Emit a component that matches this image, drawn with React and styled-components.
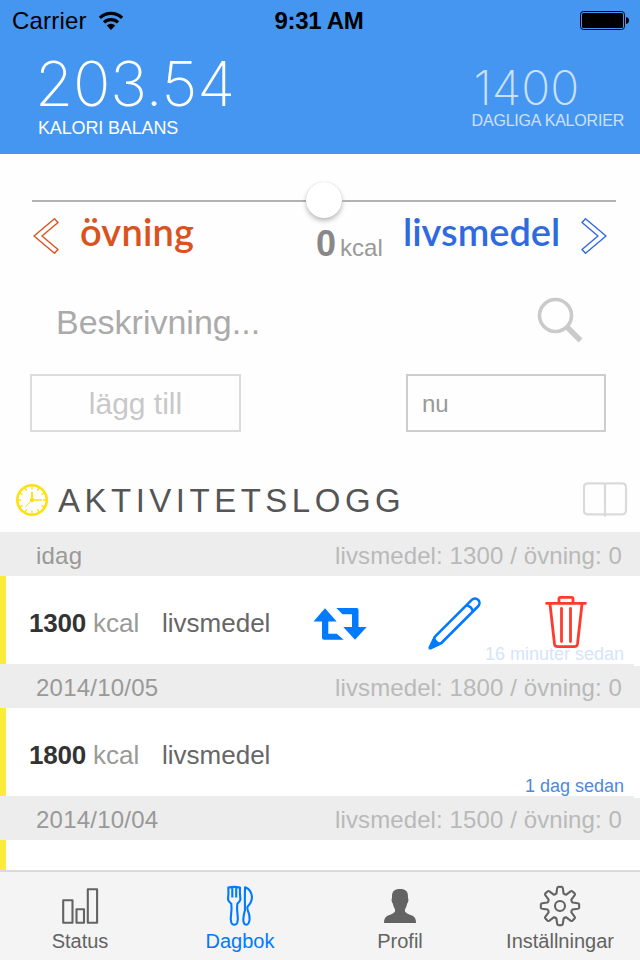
import React from "react";
import styled, { createGlobalStyle } from "styled-components";

const Global = createGlobalStyle`
  * { box-sizing: border-box; }
  body { margin: 0; background: #fefefe; font-family: "Liberation Sans", Arial, sans-serif; }
  button, input { font-family: inherit; }
`;

const Screen = styled.div`
  width: 640px;
  height: 960px;
  overflow: hidden;
  display: flex;
  flex-direction: column;
  background: #fefefe;
`;

const Header = styled.header`
  height: 154px;
  flex: none;
  background: #4596f1;
  color: #fff;
`;

const StatusBar = styled.div`
  height: 40px;
  padding: 0 11px 0 12px;
  display: grid;
  grid-template-columns: 1fr auto 1fr;
  align-items: center;
  color: #000;
  font-size: 24px;
  line-height: 28px;
`;

const Carrier = styled.div`
  display: flex;
  align-items: center;
  gap: 11px;
  padding-top: 2px;
  letter-spacing: 0.2px;
`;

const Clock = styled.div`
  padding-top: 2px;
  margin-right: 3px;
  font-weight: 700;
  letter-spacing: -0.3px;
`;

const BatterySlot = styled.div`
  display: flex;
  justify-content: flex-end;
`;

const Totals = styled.div`
  display: flex;
  justify-content: space-between;
  padding: 0 16px 0 38px;
`;

const Total = styled.div`
  padding-top: ${(p) => (p.$small ? 27 : 14)}px;
  opacity: ${(p) => (p.$small ? 0.72 : 1)};
`;

const TotalNumber = styled.div`
  margin-left: ${(p) => (p.$small ? 2 : -3)}px;
  font-family: Inter, "Liberation Sans", sans-serif;
  font-weight: 250;
  font-size: ${(p) => (p.$small ? 48 : 62)}px;
  line-height: ${(p) => (p.$small ? 42 : 60)}px;
  letter-spacing: ${(p) => (p.$small ? 0 : -0.2)}px;
`;

const TotalLabel = styled.div`
  font-size: ${(p) => (p.$small ? 16 : 18)}px;
  line-height: ${(p) => (p.$small ? 24 : 28)}px;
  letter-spacing: ${(p) => (p.$small ? -0.2 : -0.15)}px;
  white-space: nowrap;
`;

const Entry = styled.section`
  height: 378px;
  flex: none;
  display: flex;
  flex-direction: column;
`;

const Slider = styled.div`
  height: 36px;
  margin: 28px 24px 0 32px;
  display: flex;
  align-items: center;
`;

const Track = styled.div`
  height: 2px;
  margin-top: 2px;
  flex: ${(p) => p.$grow};
  background: #b2b2b2;
`;

const Knob = styled.div`
  width: 36px;
  height: 36px;
  border-radius: 50%;
  background: #fff;
  box-shadow: 0 3px 5px rgba(0, 0, 0, 0.25), 0 0 1px rgba(0, 0, 0, 0.2);
`;

const Kinds = styled.div`
  height: 60px;
  display: flex;
  align-items: flex-start;
  padding: 0 32px 0 33px;
`;

const Kind = styled.div`
  margin-left: ${(p) => p.$left}px;
  width: ${(p) => p.$width}px;
  font-family: Lato, sans-serif;
  font-weight: 600;
  font-size: 38px;
  line-height: 26px;
  letter-spacing: ${(p) => p.$spacing}px;
  color: ${(p) => p.$color};
  white-space: nowrap;
`;

const ChevronSlot = styled.div`
  margin-left: ${(p) => p.$left}px;
  height: 36px;
`;

const Amount = styled.div`
  margin-left: ${(p) => p.$left}px;
  width: 69px;
  padding-top: 6px;
  display: flex;
  align-items: baseline;
  gap: 4px;
  color: #999;
  font-size: 24px;
  line-height: 40px;
`;

const AmountValue = styled.strong`
  font-size: 36px;
  color: #888;
`;

const Search = styled.div`
  height: 50px;
  margin-top: 17px;
  padding: 0 56px;
  display: flex;
  align-items: center;
  justify-content: space-between;
  color: #aaa;
  font-size: 34px;
  line-height: 40px;
`;

const SearchText = styled.span`
  padding-top: 4px;
`;

const Controls = styled.div`
  margin-top: 29px;
  padding: 0 34px 0 30px;
  display: flex;
  justify-content: space-between;
`;

const AddButton = styled.button`
  width: 211px;
  height: 58px;
  padding: 2px 0 0;
  border: 2px solid #dcdcdc;
  background: transparent;
  color: #c8c8c8;
  font-size: 30px;
`;

const TimeField = styled.div`
  width: 200px;
  height: 58px;
  padding: 2px 14px 0;
  display: flex;
  align-items: center;
  border: 2px solid #cdcdcd;
  color: #999;
  font-size: 24px;
`;

const LogTitle = styled.div`
  height: 64px;
  margin-top: auto;
  padding: 0 12px 0 16px;
  display: flex;
  align-items: center;
`;

const LogHeading = styled.h1`
  flex: 1;
  margin: 0 0 0 10px;
  padding-top: 2px;
  color: #555;
  font-weight: 400;
  font-size: 33px;
  line-height: 38px;
  letter-spacing: 4.5px;
`;

const Log = styled.main`
  flex: 1;
  overflow: hidden;
`;

const DayHeader = styled.div`
  height: 44px;
  padding: 4px 18px 0 36px;
  display: flex;
  align-items: center;
  justify-content: space-between;
  background: linear-gradient(#fff, #fff) right top / 6px ${(p) => (p.$first ? 0 : 2)}px no-repeat #ededed;
  color: #999;
  font-size: 24px;
  letter-spacing: 0.22px;
`;

const DaySummary = styled.span`
  color: #b9b9b9;
  letter-spacing: 0.1px;
`;

const LogRow = styled.div`
  position: relative;
  height: 88px;
  padding: 6px 0 0 23px;
  display: flex;
  align-items: center;
  border-left: 6px solid #ffeb3b;
  background: #fff;
  color: #999;
  font-size: 26px;
`;

const Calories = styled.strong`
  width: 64px;
  color: #333;
  letter-spacing: -0.2px;
`;

const Unit = styled.span`
  width: 69px;
`;

const Type = styled.span`
  color: #666;
`;

const Actions = styled.div`
  position: absolute;
  left: 302px;
  top: 14px;
  display: grid;
  grid-template-columns: 120px 112px 48px;
`;

const Ago = styled.div`
  position: absolute;
  right: 16px;
  bottom: 0;
  color: ${(p) => (p.$faded ? "#d6e4f8" : "#4a8ae0")};
  font-size: 18px;
  line-height: 20px;
`;

const TabBar = styled.nav`
  height: 90px;
  flex: none;
  display: grid;
  grid-template-columns: repeat(4, 1fr);
  border-top: 2px solid #dadada;
  background: #f4f4f4;
`;

const Tab = styled.div`
  display: flex;
  flex-direction: column;
  align-items: center;
  padding-top: 12px;
  color: ${(p) => (p.$active ? "#007aff" : "#636363")};
  font-size: 20px;
  line-height: 22px;
  gap: 2px;
`;

const Wifi = () => (
  <svg width="26" height="20" viewBox="0 0 26 20" fill="none" stroke="#000" strokeWidth="3.2">
    <path d="M1.900 6.900a16 16 0 0 1 22.200 0" />
    <path d="M6 11.400a10 10 0 0 1 14 0" />
    <path d="M8.700 14.600a6.200 6.200 0 0 1 8.600 0L13 19z" fill="#000" stroke="none" />
  </svg>
);

const Battery = () => (
  <svg width="49" height="19" viewBox="0 0 49 19">
    <rect x=".5" y=".5" width="44" height="18" rx="3" fill="none" stroke="#000" />
    <rect x="2" y="2" width="41" height="15" rx="1.5" />
    <path d="M46 6c2 .3 3 1.500 3 3.500s-1 3.200-3 3.500z" />
  </svg>
);

const Chevron = ({ color, right }) => (
  <svg width="26" height="36" viewBox="0 0 26 36" fill="none" stroke={color} strokeWidth="1.4" strokeLinejoin="round">
    <path
      transform={right ? "translate(26 0) scale(-1 1)" : undefined}
      d="M1 18 21.500 .8 25 4.500 9 18 25 31.500 21.500 35.200z"
    />
  </svg>
);

const SearchIcon = () => (
  <svg width="48" height="48" viewBox="0 0 48 48" fill="none" stroke="#cacaca">
    <circle cx="19.500" cy="19.500" r="16" strokeWidth="3.600" />
    <path d="M30.500 30.500 44.500 44.500" strokeWidth="5.500" />
  </svg>
);

const ClockIcon = () => (
  <svg width="32" height="32" viewBox="0 0 32 32" fill="none" stroke="#fddf14">
    <circle cx="16" cy="16" r="14.700" strokeWidth="2.600" />
    {Array.from({ length: 12 }, (_, i) => (
      <path key={i} d="M16 2v3.200" strokeWidth="1.400" transform={`rotate(${i * 30} 16 16)`} />
    ))}
    <path d="M16 8v8" strokeWidth="2" />
    <path d="M16 16h10" strokeWidth="1.500" />
    <path d="M16 16 9.500 22.500" strokeWidth="1" />
    <circle cx="16" cy="16" r="2.200" fill="#fddf14" stroke="none" />
  </svg>
);

const BookIcon = () => (
  <svg width="45" height="36" viewBox="0 0 45 36" fill="none" stroke="#dadada" strokeWidth="2.200">
    <path
      transform="translate(-.5 -.7)"
      d="M22.500 3.500Q22.500 2 20.500 2H5.500Q1.500 2 1.500 6V29Q1.500 33 5.500 33H20.500Q22.500 33 22.500 34.500Q22.500 33 24.500 33H39.500Q43.500 33 43.500 29V6Q43.500 2 39.500 2H24.500Q22.500 2 22.500 3.500V35.500"
    />
  </svg>
);

const RepeatIcon = () => (
  <svg width="64" height="64" viewBox="0 0 64 64" fill="#007aff">
    <path d="M5.500 31.500 17 18.300 28.700 31.500H20.300V43.700H28.700L35.700 49.800H16Q14 49.800 14 47.800V31.500z" />
    <path d="M28.300 18H48.700Q50.500 18 50.500 19.800V37H58.700L47 49.800 35.300 37H44V24.200H34.500z" />
  </svg>
);

const PencilIcon = () => (
  <svg width="64" height="64" viewBox="0 0 64 64" fill="none" stroke="#007aff" strokeWidth="2.600" strokeLinejoin="round">
    <g transform="translate(.3 59.700) rotate(-45)">
      <path d="M14-4.500H66a4.500 4.500 0 0 1 0 9H14L2.500 .5 2.500-.5z" />
      <path d="M58.500-4.500Q61.500 0 58.500 4.500" />
      <path d="M0 0 14-5.700Q11 0 14 5.700z" fill="#007aff" stroke="none" />
    </g>
  </svg>
);

const TrashIcon = () => (
  <svg width="48" height="64" viewBox="0 0 48 64" fill="none" stroke="#ff3b30" strokeWidth="2.800" strokeLinecap="round" strokeLinejoin="round">
    <path d="M7.500 13.300H46.500M20 13V8.500Q20 7.400 21 7.400H33Q34 7.400 34 8.500V13M11 14 15.500 54Q16 56.700 19 56.700H35Q38 56.700 38.500 54L43 14M22.500 18.500V51.500M31.500 18.500V51.500" transform="translate(-1 0)" />
  </svg>
);

const StatusIcon = () => (
  <svg width="44" height="44" viewBox="0 0 44 44" fill="none" stroke="currentColor" strokeWidth="2.100" strokeLinejoin="round">
    <rect x="5.200" y="16.300" width="9.300" height="22.500" />
    <rect x="18.500" y="25.300" width="7.500" height="13.500" />
    <rect x="29.800" y="5.200" width="9.300" height="33.600" />
  </svg>
);

const CutleryIcon = () => (
  <svg width="44" height="44" viewBox="0 0 44 44" fill="none" stroke="currentColor" strokeWidth="2.100" strokeLinejoin="round">
    <path d="M10.300 3.500Q16.300 2.200 22 3.500 21.600 9 22.400 15.500 22 17.500 19.300 19.800 18.700 25 19.500 30 20.300 35 19.300 38.500 18.500 40.700 16.300 40.700 14.100 40.700 13.300 38.500 12.300 35 13.100 30 13.900 25 13.300 19.800 10.500 17.500 10 15.500 10.800 9 10.300 3.500zM14.300 3.500V13.500M18.200 3.500V13.500" />
    <path d="M27 3.200Q33.500 5.500 34 13 33.800 18.500 29.600 22.500 28.800 24 30 27 31.900 31 31.600 35.500 31 40.700 28.300 40.700 25.300 40.700 25.300 35.500 25.500 31 27 26 26.700 14 27 3.200z" />
  </svg>
);

const ProfileIcon = () => (
  <svg width="44" height="44" viewBox="0 0 44 44" fill="currentColor">
    <path d="M22 5C28 5 30.300 7.500 30 14 30.800 15.500 30.500 18 29.200 19.500 28.500 22.500 27.800 24 27 25.300V27.500C28 29.500 31 30.300 34 31.500 37 33 38 35 38 39H6C6 35 7 33 10 31.500 13 30.300 16 29.500 17 27.500V25.300C16.200 24 15.500 22.500 14.800 19.500 13.500 18 13.200 15.500 14 14 13.700 7.500 16 5 22 5z" />
  </svg>
);

const gearPoint = (radius, degrees) => {
  const a = (degrees * Math.PI) / 180;
  return `${(22 + radius * Math.sin(a)).toFixed(2)} ${(22 - radius * Math.cos(a)).toFixed(2)}`;
};

const gearPath = `M${Array.from({ length: 8 }, (_, i) => {
  const a = i * 45;
  return `${gearPoint(13, a - 16)}L${gearPoint(18, a - 9)}Q${gearPoint(20, a - 7)} ${gearPoint(19, a)}Q${gearPoint(20, a + 7)} ${gearPoint(18, a + 9)}L${gearPoint(13, a + 16)}Q${gearPoint(12.2, a + 22.5)} `;
}).join("")}${gearPoint(13, -16)}z`;

const GearIcon = () => (
  <svg width="44" height="44" viewBox="0 0 44 44" fill="none" stroke="currentColor" strokeWidth="2.100" strokeLinejoin="round">
    <path d={gearPath} />
    <circle cx="22" cy="22" r="5" />
  </svg>
);

const Day = ({ date, total, first }) => (
  <DayHeader $first={first}>
    <span>{date}</span>
    <DaySummary>livsmedel: {total} / övning: 0</DaySummary>
  </DayHeader>
);

const Item = ({ calories, ago, open }) => (
  <LogRow>
    <Calories>{calories}</Calories>
    <Unit>kcal</Unit>
    <Type>livsmedel</Type>
    <Ago $faded={open}>{ago}</Ago>
    {open && (
      <Actions>
        <RepeatIcon />
        <PencilIcon />
        <TrashIcon />
      </Actions>
    )}
  </LogRow>
);

export default function App() {
  return (
    <Screen>
      <Global />
      <Header>
        <StatusBar>
          <Carrier>Carrier <Wifi /></Carrier>
          <Clock>9:31 AM</Clock>
          <BatterySlot><Battery /></BatterySlot>
        </StatusBar>
        <Totals>
          <Total>
            <TotalNumber>203.54</TotalNumber>
            <TotalLabel>KALORI BALANS</TotalLabel>
          </Total>
          <Total $small>
            <TotalNumber $small>1400</TotalNumber>
            <TotalLabel $small>DAGLIGA KALORIER</TotalLabel>
          </Total>
        </Totals>
      </Header>
      <Entry>
        <Slider>
          <Track $grow={274} />
          <Knob />
          <Track $grow={274} />
        </Slider>
        <Kinds>
          <ChevronSlot $left={0}><Chevron color="#d9531e" /></ChevronSlot>
          <Kind $left={21} $width={114} $spacing={0.2} $color="#d9531e">övning</Kind>
          <Amount $left={122}><AmountValue>0</AmountValue>kcal</Amount>
          <Kind $left={18} $width={158} $spacing={0} $color="#2f6adf">livsmedel</Kind>
          <ChevronSlot $left={20}><Chevron color="#2f6adf" right /></ChevronSlot>
        </Kinds>
        <Search>
          <SearchText>Beskrivning...</SearchText>
          <SearchIcon />
        </Search>
        <Controls>
          <AddButton>lägg till</AddButton>
          <TimeField>nu</TimeField>
        </Controls>
        <LogTitle>
          <ClockIcon />
          <LogHeading>AKTIVITETSLOGG</LogHeading>
          <BookIcon />
        </LogTitle>
      </Entry>
      <Log>
        <Day date="idag" total="1300" first />
        <Item calories="1300" ago="16 minuter sedan" open />
        <Day date="2014/10/05" total="1800" />
        <Item calories="1800" ago="1 dag sedan" />
        <Day date="2014/10/04" total="1500" />
        <LogRow />
      </Log>
      <TabBar>
        <Tab><StatusIcon />Status</Tab>
        <Tab $active><CutleryIcon />Dagbok</Tab>
        <Tab><ProfileIcon />Profil</Tab>
        <Tab><GearIcon />Inställningar</Tab>
      </TabBar>
    </Screen>
  );
}
